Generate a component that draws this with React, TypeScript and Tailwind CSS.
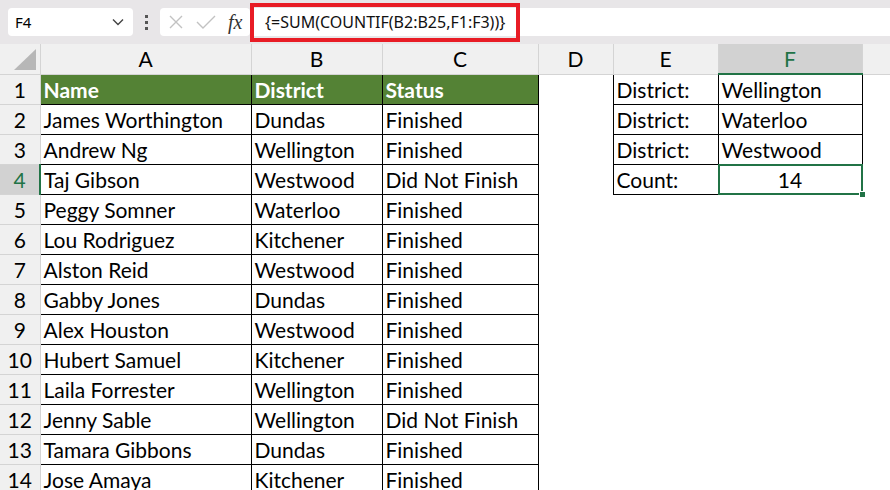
import React from 'react';

const rows: [string, string, string][] = [
  ['James Worthington', 'Dundas', 'Finished'],
  ['Andrew Ng', 'Wellington', 'Finished'],
  ['Taj Gibson', 'Westwood', 'Did Not Finish'],
  ['Peggy Somner', 'Waterloo', 'Finished'],
  ['Lou Rodriguez', 'Kitchener', 'Finished'],
  ['Alston Reid', 'Westwood', 'Finished'],
  ['Gabby Jones', 'Dundas', 'Finished'],
  ['Alex Houston', 'Westwood', 'Finished'],
  ['Hubert Samuel', 'Kitchener', 'Finished'],
  ['Laila Forrester', 'Wellington', 'Finished'],
  ['Jenny Sable', 'Wellington', 'Did Not Finish'],
  ['Tamara Gibbons', 'Dundas', 'Finished'],
  ['Jose Amaya', 'Kitchener', 'Finished'],
];

// side table in E1:F4
const side: [string, string][] = [
  ['District:', 'Wellington'],
  ['District:', 'Waterloo'],
  ['District:', 'Westwood'],
  ['Count:', '14'],
];

const cell = 'px-[3px] pb-[2px] align-bottom whitespace-nowrap';
const boxed = 'border border-black';
const colHead = 'border-r border-b border-[#d4d4d4] bg-[#f0f0f0] text-center font-normal';
const rowHead = 'border-r border-b border-[#d4d4d4] bg-[#f0f0f0] text-center pb-[2px] align-bottom';

export default function App() {
  return (
    <div
      className="w-[890px] h-[490px] overflow-hidden bg-white text-black"
      style={{ fontFamily: 'Lato, "Open Sans", sans-serif' }}
    >
      {/* Formula bar */}
      <div className="h-[44px] bg-[#e8e6e8] flex items-center pl-[8px] relative">
        <div
          className="w-[125px] h-[28px] bg-white rounded-[4px] flex items-center justify-between pl-[7px] pr-[9px] text-[15px]"
          style={{ fontFamily: '"Noto Sans", sans-serif' }}
        >
          <span>F4</span>
          <svg width="12" height="8" viewBox="0 0 12 8" fill="none" stroke="#444" strokeWidth="1.4">
            <path d="M1 1.5 L6 6.5 L11 1.5" />
          </svg>
        </div>
        <div className="w-[27px] flex flex-col items-center gap-[3px]">
          <span className="w-[3px] h-[3px] bg-[#555]" />
          <span className="w-[3px] h-[3px] bg-[#555]" />
          <span className="w-[3px] h-[3px] bg-[#555]" />
        </div>
        <div className="w-[90px] h-[28px] bg-white rounded-[4px] flex items-center pl-[8px] gap-[12px]">
          <svg width="16" height="16" viewBox="0 0 16 16" stroke="#c2c2c2" strokeWidth="1.4">
            <path d="M2 2 L14 14 M14 2 L2 14" />
          </svg>
          <svg width="20" height="16" viewBox="0 0 20 16" fill="none" stroke="#c2c2c2" strokeWidth="1.4">
            <path d="M1 8 L7 14 L19 2" />
          </svg>
          <span
            className="italic text-[20px] leading-none text-[#333]"
            style={{ fontFamily: '"Liberation Serif", serif' }}
          >
            fx
          </span>
        </div>
        <div className="flex-1 h-[28px] bg-white ml-[3px] flex items-center pl-[12px]">
          <span className="text-[16px] text-[#111]" style={{ fontFamily: '"Noto Sans", sans-serif' }}>
            {'{=SUM(COUNTIF(B2:B25,F1:F3))}'}
          </span>
        </div>
        <div className="absolute left-[250px] top-[3px] w-[270px] h-[39px] border-[4px] border-[#e81c25] pointer-events-none" />
      </div>

      {/* Grid */}
      <table className="table-fixed border-collapse w-[902px] text-[21px] leading-[24px]">
        <colgroup>
          <col className="w-[40px]" />
          <col className="w-[211px]" />
          <col className="w-[131px]" />
          <col className="w-[156px]" />
          <col className="w-[75px]" />
          <col className="w-[105px]" />
          <col className="w-[144px]" />
          <col className="w-[40px]" />
        </colgroup>
        <thead>
          <tr className="h-[30px]">
            <th className={`${colHead} relative`}>
              <svg className="absolute right-[4px] bottom-[4px]" width="22" height="21" viewBox="0 0 22 21">
                <path d="M22 0 L22 21 L0 21 Z" fill="#b7b7b7" />
              </svg>
            </th>
            <th className={colHead}>A</th>
            <th className={colHead}>B</th>
            <th className={colHead}>C</th>
            <th className={colHead}>D</th>
            <th className={colHead}>E</th>
            <th className="border-r border-[#d4d4d4] border-b-2 border-b-[#217346] bg-[#d2d2d2] text-center font-normal text-[#217346]">
              F
            </th>
            <th className={colHead} />
          </tr>
        </thead>
        <tbody>
          <tr className="h-[30px]">
            <td className={rowHead}>1</td>
            <td className={`${cell} ${boxed} bg-[#548235] text-white font-bold`}>Name</td>
            <td className={`${cell} ${boxed} bg-[#548235] text-white font-bold`}>District</td>
            <td className={`${cell} ${boxed} bg-[#548235] text-white font-bold`}>Status</td>
            <td className={cell} />
            <td className={`${cell} ${boxed}`}>{side[0][0]}</td>
            <td className={`${cell} ${boxed}`}>{side[0][1]}</td>
            <td className={cell} />
          </tr>
          {rows.map((r, i) => {
            const n = i + 2;
            const s = side[i + 1];
            const selected = n === 4;
            return (
              <tr key={n} className="h-[30px]">
                <td
                  className={
                    selected
                      ? 'border-b border-[#d4d4d4] border-r-2 border-r-[#217346] bg-[#d2d2d2] text-[#217346] text-center pb-[2px] align-bottom'
                      : rowHead
                  }
                >
                  {n}
                </td>
                <td className={`${cell} ${boxed}`}>{r[0]}</td>
                <td className={`${cell} ${boxed}`}>{r[1]}</td>
                <td className={`${cell} ${boxed}`}>{r[2]}</td>
                <td className={cell} />
                {s ? (
                  <>
                    <td className={`${cell} ${boxed}`}>{s[0]}</td>
                    <td className={`${cell} ${boxed} relative ${selected ? 'text-center' : ''}`}>
                      {s[1]}
                      {selected && (
                        <>
                          <div className="absolute z-10 -left-[1px] -top-[1px] -right-[1px] -bottom-[1px] border-2 border-[#217346]" />
                          <div className="absolute z-20 -right-[4px] -bottom-[4px] w-[7px] h-[7px] bg-[#217346] border border-white" />
                        </>
                      )}
                    </td>
                  </>
                ) : (
                  <>
                    <td className={cell} />
                    <td className={cell} />
                  </>
                )}
                <td className={cell} />
              </tr>
            );
          })}
        </tbody>
      </table>
    </div>
  );
}
